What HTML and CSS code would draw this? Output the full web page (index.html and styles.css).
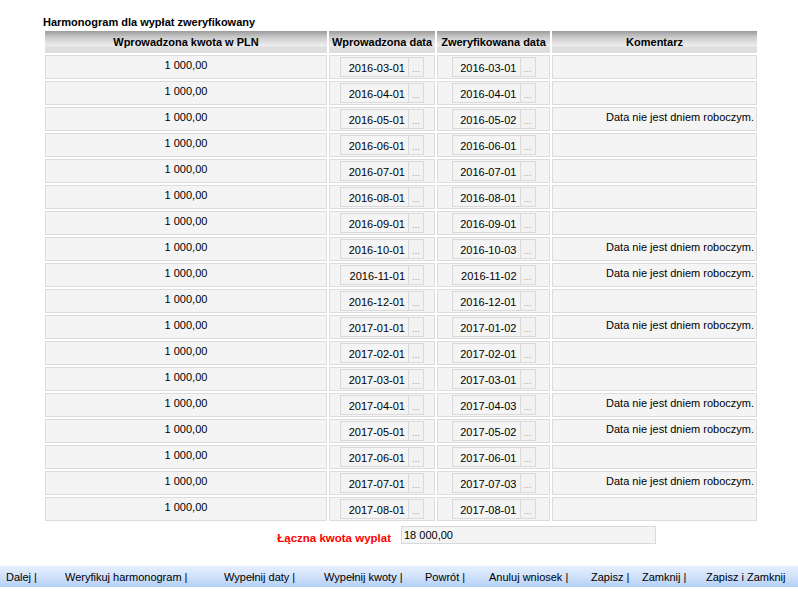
FILE: index.html
```html
<!DOCTYPE html>
<html lang="pl">
<head>
<meta charset="utf-8">
<title>Harmonogram dla wypłat zweryfikowany</title>
<link rel="stylesheet" href="styles.css">
</head>
<body>
<div class="page">
  <div class="title">Harmonogram dla wypłat zweryfikowany</div>
  <div class="grid">
    <div class="th">Wprowadzona kwota w PLN</div>
    <div class="th">Wprowadzona data</div>
    <div class="th">Zweryfikowana data</div>
    <div class="th">Komentarz</div>

    <div class="td amt">1 000,00</div><div class="td dt"><input class="date" readonly value="2016-03-01"><button class="pick">...</button></div><div class="td dt"><input class="date" readonly value="2016-03-01"><button class="pick">...</button></div><div class="td com"></div>
    <div class="td amt">1 000,00</div><div class="td dt"><input class="date" readonly value="2016-04-01"><button class="pick">...</button></div><div class="td dt"><input class="date" readonly value="2016-04-01"><button class="pick">...</button></div><div class="td com"></div>
    <div class="td amt">1 000,00</div><div class="td dt"><input class="date" readonly value="2016-05-01"><button class="pick">...</button></div><div class="td dt"><input class="date" readonly value="2016-05-02"><button class="pick">...</button></div><div class="td com">Data nie jest dniem roboczym.</div>
    <div class="td amt">1 000,00</div><div class="td dt"><input class="date" readonly value="2016-06-01"><button class="pick">...</button></div><div class="td dt"><input class="date" readonly value="2016-06-01"><button class="pick">...</button></div><div class="td com"></div>
    <div class="td amt">1 000,00</div><div class="td dt"><input class="date" readonly value="2016-07-01"><button class="pick">...</button></div><div class="td dt"><input class="date" readonly value="2016-07-01"><button class="pick">...</button></div><div class="td com"></div>
    <div class="td amt">1 000,00</div><div class="td dt"><input class="date" readonly value="2016-08-01"><button class="pick">...</button></div><div class="td dt"><input class="date" readonly value="2016-08-01"><button class="pick">...</button></div><div class="td com"></div>
    <div class="td amt">1 000,00</div><div class="td dt"><input class="date" readonly value="2016-09-01"><button class="pick">...</button></div><div class="td dt"><input class="date" readonly value="2016-09-01"><button class="pick">...</button></div><div class="td com"></div>
    <div class="td amt">1 000,00</div><div class="td dt"><input class="date" readonly value="2016-10-01"><button class="pick">...</button></div><div class="td dt"><input class="date" readonly value="2016-10-03"><button class="pick">...</button></div><div class="td com">Data nie jest dniem roboczym.</div>
    <div class="td amt">1 000,00</div><div class="td dt"><input class="date" readonly value="2016-11-01"><button class="pick">...</button></div><div class="td dt"><input class="date" readonly value="2016-11-02"><button class="pick">...</button></div><div class="td com">Data nie jest dniem roboczym.</div>
    <div class="td amt">1 000,00</div><div class="td dt"><input class="date" readonly value="2016-12-01"><button class="pick">...</button></div><div class="td dt"><input class="date" readonly value="2016-12-01"><button class="pick">...</button></div><div class="td com"></div>
    <div class="td amt">1 000,00</div><div class="td dt"><input class="date" readonly value="2017-01-01"><button class="pick">...</button></div><div class="td dt"><input class="date" readonly value="2017-01-02"><button class="pick">...</button></div><div class="td com">Data nie jest dniem roboczym.</div>
    <div class="td amt">1 000,00</div><div class="td dt"><input class="date" readonly value="2017-02-01"><button class="pick">...</button></div><div class="td dt"><input class="date" readonly value="2017-02-01"><button class="pick">...</button></div><div class="td com"></div>
    <div class="td amt">1 000,00</div><div class="td dt"><input class="date" readonly value="2017-03-01"><button class="pick">...</button></div><div class="td dt"><input class="date" readonly value="2017-03-01"><button class="pick">...</button></div><div class="td com"></div>
    <div class="td amt">1 000,00</div><div class="td dt"><input class="date" readonly value="2017-04-01"><button class="pick">...</button></div><div class="td dt"><input class="date" readonly value="2017-04-03"><button class="pick">...</button></div><div class="td com">Data nie jest dniem roboczym.</div>
    <div class="td amt">1 000,00</div><div class="td dt"><input class="date" readonly value="2017-05-01"><button class="pick">...</button></div><div class="td dt"><input class="date" readonly value="2017-05-02"><button class="pick">...</button></div><div class="td com">Data nie jest dniem roboczym.</div>
    <div class="td amt">1 000,00</div><div class="td dt"><input class="date" readonly value="2017-06-01"><button class="pick">...</button></div><div class="td dt"><input class="date" readonly value="2017-06-01"><button class="pick">...</button></div><div class="td com"></div>
    <div class="td amt">1 000,00</div><div class="td dt"><input class="date" readonly value="2017-07-01"><button class="pick">...</button></div><div class="td dt"><input class="date" readonly value="2017-07-03"><button class="pick">...</button></div><div class="td com">Data nie jest dniem roboczym.</div>
    <div class="td amt">1 000,00</div><div class="td dt"><input class="date" readonly value="2017-08-01"><button class="pick">...</button></div><div class="td dt"><input class="date" readonly value="2017-08-01"><button class="pick">...</button></div><div class="td com"></div>
  </div>
  <div class="total">
    <div class="total-label">Łączna kwota wyplat</div>
    <input class="total-input" readonly value="18 000,00">
  </div>
</div>
<div class="toolbar">
  <span class="tb">Dalej |</span>
  <span class="tb">Weryfikuj harmonogram |</span>
  <span class="tb">Wypełnij daty |</span>
  <span class="tb">Wypełnij kwoty |</span>
  <span class="tb">Powrót |</span>
  <span class="tb">Anuluj wniosek |</span>
  <span class="tb">Zapisz |</span>
  <span class="tb">Zamknij |</span>
  <span class="tb">Zapisz i Zamknij</span>
</div>
</body>
</html>
```
FILE: styles.css
```css
html, body {
  margin: 0;
  padding: 0;
  background: #ffffff;
}
body {
  font-family: "Liberation Sans", Arial, sans-serif;
  font-size: 11px;
  color: #000;
}
.page {
  padding: 16px 0 0 43px;
}
.title {
  font-weight: bold;
  line-height: 13px;
  height: 13px;
  margin-bottom: 1px;
}
.grid {
  display: grid;
  grid-template-columns: 282px 106px 113px 205px;
  column-gap: 2px;
  row-gap: 2px;
  margin: 2px 0 0 2px;
}
.th {
  height: 22px;
  line-height: 22px;
  font-weight: bold;
  text-align: center;
  white-space: nowrap;
  overflow: hidden;
  background: linear-gradient(to bottom, #9a9a9a 0px, #c9c9c9 6px, #ebebeb 14px, #eeeeee 15px, #dedede 16px, #dedede 22px);
}
.td {
  box-sizing: border-box;
  height: 24px;
  border: 1px solid #dcdcdc;
  background: #f4f4f4;
}
.amt {
  text-align: center;
  padding-top: 3px;
  line-height: 13px;
}
.com {
  text-align: right;
  padding: 3px 2px 0 0;
  line-height: 13px;
  white-space: nowrap;
}
.dt {
  display: flex;
  justify-content: center;
  align-items: flex-start;
  padding-top: 1px;
}
.date {
  box-sizing: border-box;
  width: 69px;
  height: 20px;
  margin: 0;
  padding: 2px 3px 0 0;
  border: 1px solid #dadada;
  background: #f4f4f4;
  font-family: "Liberation Sans", Arial, sans-serif;
  font-size: 11px;
  color: #000;
  text-align: right;
  outline: none;
}
.pick {
  box-sizing: border-box;
  width: 15px;
  height: 20px;
  margin: 0;
  padding: 3px 0 0 0;
  border: 1px solid #dadada;
  border-left: none;
  background: #f2f2f2;
  color: #9c9c9c;
  font-family: "Liberation Sans", Arial, sans-serif;
  font-size: 9px;
  line-height: 14px;
  text-align: center;
  cursor: pointer;
}
.total {
  display: flex;
  align-items: flex-start;
  margin-top: 5px;
}
.total-label {
  width: 348px;
  text-align: right;
  color: #ff0000;
  font-weight: bold;
  font-size: 11.5px;
  line-height: 18px;
  padding-top: 3px;
  box-sizing: border-box;
  height: 18px;
}
.total-input {
  box-sizing: border-box;
  width: 255px;
  height: 18px;
  margin: 0 0 0 10px;
  padding: 0 0 0 2px;
  border: 1px solid #dadada;
  background: #f4f4f4;
  font-family: "Liberation Sans", Arial, sans-serif;
  font-size: 11px;
  color: #000;
  outline: none;
}
.toolbar {
  margin-top: 22px;
  height: 21px;
  box-sizing: border-box;
  padding: 1px 0 0 6px;
  line-height: 20px;
  display: grid;
  grid-template-columns: 59px 159px 100px 101px 64px 102px 51px 64px auto;
  background: linear-gradient(to bottom, #e6f0fe 0%, #d3e3fb 45%, #b4d0f7 100%);
  white-space: nowrap;
}
.tb {
  color: #000;
}
```
